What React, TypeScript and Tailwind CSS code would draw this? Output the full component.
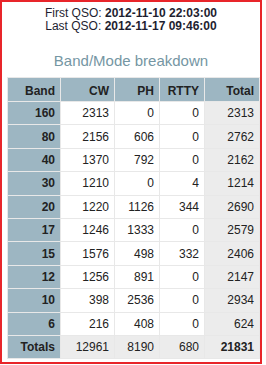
const rows: [string, number, number, number, number][] = [
  ["160", 2313, 0, 0, 2313],
  ["80", 2156, 606, 0, 2762],
  ["40", 1370, 792, 0, 2162],
  ["30", 1210, 0, 4, 1214],
  ["20", 1220, 1126, 344, 2690],
  ["17", 1246, 1333, 0, 2579],
  ["15", 1576, 498, 332, 2406],
  ["12", 1256, 891, 0, 2147],
  ["10", 398, 2536, 0, 2934],
  ["6", 216, 408, 0, 624],
]

const cell = "border border-[#e8e8e8] h-[23.4px] px-[5px] text-right"

export default function App() {
  return (
    <div className="w-[262px] h-[364px] border-2 border-[#e8252a] bg-white font-['Liberation_Sans',Arial,sans-serif] text-[#222]">
      <div className="pt-[5px] text-center text-[12px] leading-[13px] text-[#1e1e30]">
        <div>
          First QSO: <b>2012-11-10 22:03:00</b>
        </div>
        <div>
          Last QSO: <b>2012-11-17 09:46:00</b>
        </div>
      </div>
      <h2 className="mt-[19px] mb-[8px] text-center text-[15px] leading-[17px] text-[#7596a3]">
        Band/Mode breakdown
      </h2>
      <table className="ml-[5px] border-collapse text-[12px] leading-[14px]">
        <colgroup>
          <col className="w-[53px]" />
          <col className="w-[54px]" />
          <col className="w-[45px]" />
          <col className="w-[45px]" />
          <col className="w-[55px]" />
        </colgroup>
        <thead>
          <tr className="bg-[#9db6c2] font-bold">
            <th className={`${cell} h-[24px] pt-[2px]`}>Band</th>
            <th className={`${cell} h-[24px] pt-[2px]`}>CW</th>
            <th className={`${cell} h-[24px] pt-[2px]`}>PH</th>
            <th className={`${cell} h-[24px] pt-[2px]`}>RTTY</th>
            <th className={`${cell} h-[24px] pt-[2px]`}>Total</th>
          </tr>
        </thead>
        <tbody>
          {rows.map(([band, cw, ph, rtty, total]) => (
            <tr key={band}>
              <td className={`${cell} bg-[#9db6c2] font-bold`}>{band}</td>
              <td className={`${cell} bg-white`}>{cw}</td>
              <td className={`${cell} bg-white`}>{ph}</td>
              <td className={`${cell} bg-white`}>{rtty}</td>
              <td className={`${cell} bg-[#ececec]`}>{total}</td>
            </tr>
          ))}
          <tr className="bg-[#ececec]">
            <td className={`${cell} bg-[#9db6c2] font-bold`}>Totals</td>
            <td className={cell}>12961</td>
            <td className={cell}>8190</td>
            <td className={cell}>680</td>
            <td className={`${cell} font-bold`}>21831</td>
          </tr>
        </tbody>
      </table>
    </div>
  )
}
